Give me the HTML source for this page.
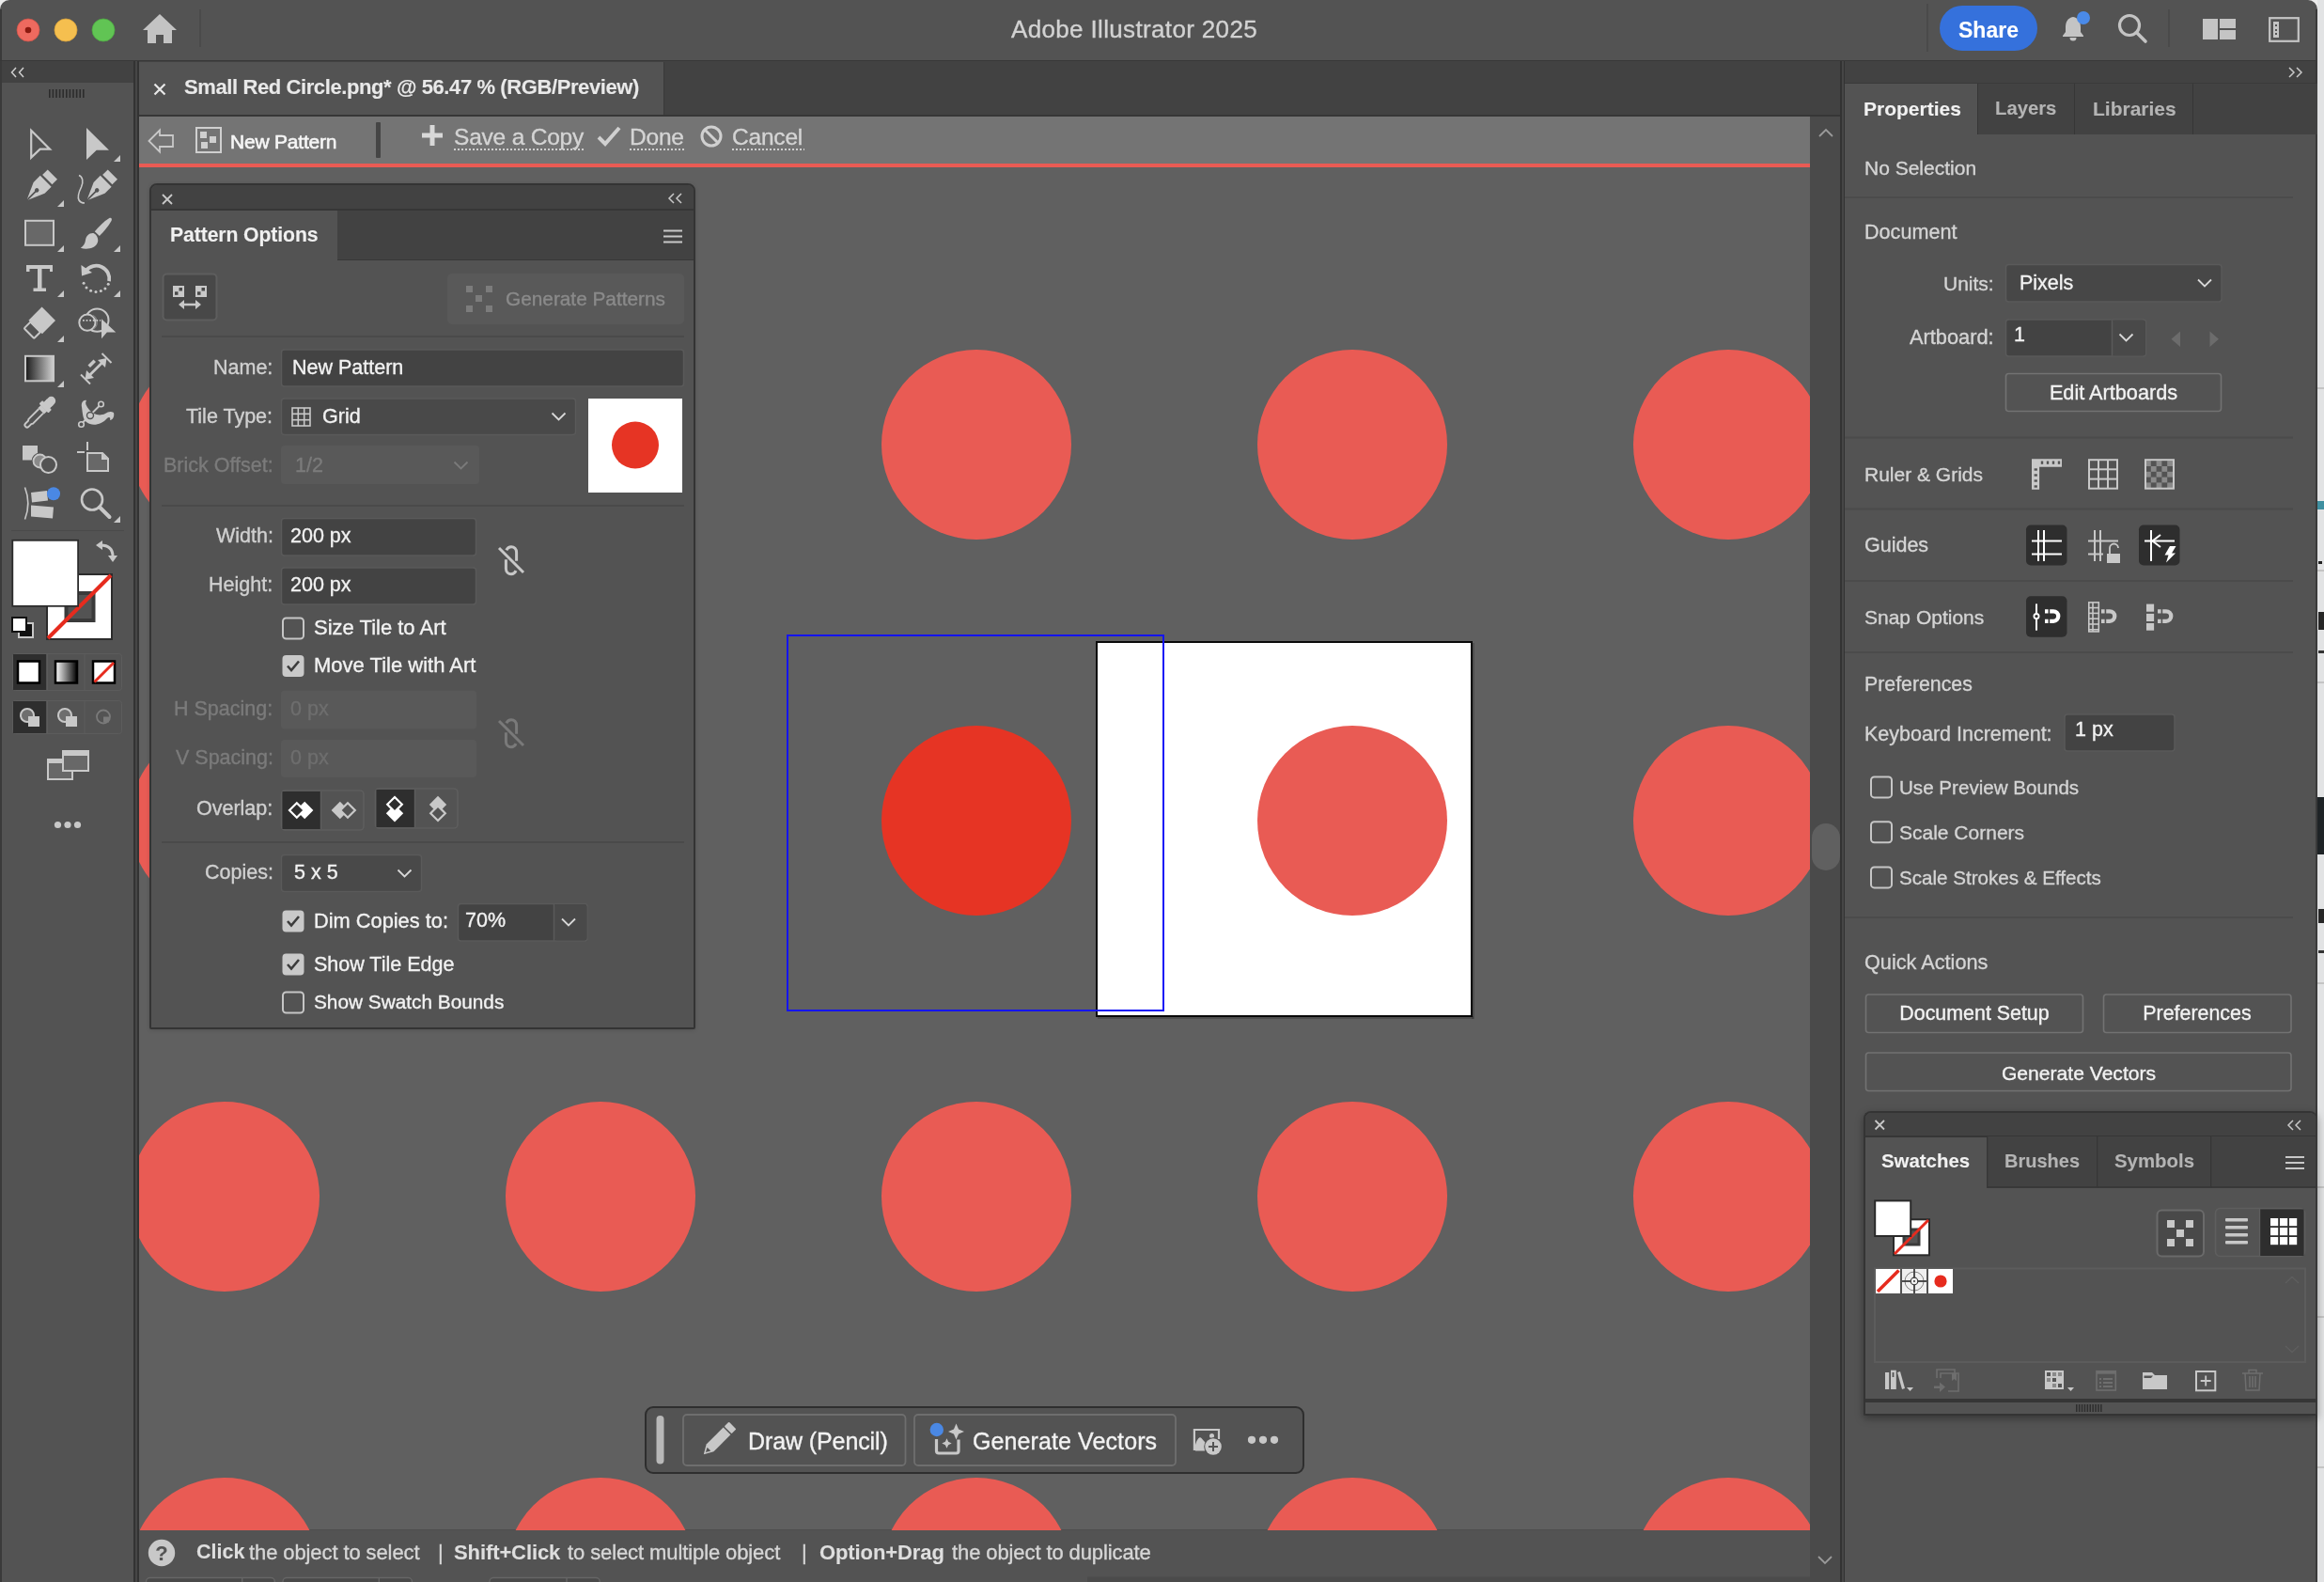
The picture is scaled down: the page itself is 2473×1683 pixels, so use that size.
<!DOCTYPE html>
<html><head><meta charset="utf-8"><style>
html,body{margin:0;padding:0;width:2473px;height:1683px;overflow:hidden;background:#ececec;}
body{position:relative;font-family:"Liberation Sans",sans-serif;}
.r{position:absolute;box-sizing:border-box;}
.t{position:absolute;white-space:pre;line-height:1;-webkit-text-stroke:0.35px currentColor;-webkit-font-smoothing:antialiased;will-change:transform;}
.s{position:absolute;overflow:visible;}
</style></head><body>
<div class="r" style="left:2440px;top:0px;width:33px;height:1683px;background:#ececec;"></div>
<div class="r" style="left:0px;top:0px;width:2466px;height:1683px;background:#535353;border-top-left-radius:10px;border-top-right-radius:10px;"></div>
<div class="r" style="left:0px;top:10px;width:2px;height:1673px;background:#3a3a3a;"></div>
<div class="r" style="left:0px;top:64px;width:2466px;height:1px;background:#383838;"></div>
<div class="r" style="left:2px;top:65px;width:140px;height:1618px;background:#535353;"></div>
<div class="r" style="left:2px;top:65px;width:140px;height:23px;background:#424242;"></div>
<div class="r" style="left:142px;top:65px;width:6px;height:1618px;background:#333333;"></div>
<div class="r" style="left:143.8px;top:65px;width:2.4px;height:1618px;background:#464646;"></div>
<div class="r" style="left:148px;top:65px;width:1810px;height:57px;background:#424242;"></div>
<div class="r" style="left:148px;top:66px;width:558px;height:56px;background:#535353;"></div>
<div class="r" style="left:706px;top:66px;width:1px;height:56px;background:#3a3a3a;"></div>
<div class="r" style="left:148px;top:122px;width:1810px;height:2px;background:#363636;"></div>
<div class="r" style="left:148px;top:124px;width:1778px;height:50px;background:#747474;"></div>
<div class="r" style="left:148px;top:174px;width:1778px;height:4px;background:#ea5b54;"></div>
<div class="r" style="left:148px;top:178px;width:1778px;height:1450px;background:#606060;"></div>
<div class="r" style="left:1926px;top:124px;width:32px;height:1559px;background:#4a4a4a;"></div>
<div class="r" style="left:1958px;top:65px;width:6px;height:1618px;background:#333333;"></div>
<div class="r" style="left:1959.8px;top:65px;width:2.4px;height:1618px;background:#464646;"></div>
<div class="r" style="left:1928px;top:876px;width:30px;height:50px;background:#606060;border-radius:15px;"></div>
<div class="r" style="left:148px;top:1628px;width:1778px;height:55px;background:#535353;"></div>
<div class="r" style="left:148px;top:1627px;width:1778px;height:1px;background:#4d4d4d;"></div>
<div class="r" style="left:1963px;top:65px;width:503px;height:1618px;background:#535353;"></div>
<div class="r" style="left:1963px;top:65px;width:503px;height:24px;background:#424242;"></div>
<div class="r" style="left:2464px;top:10px;width:2px;height:1673px;background:#3a3a3a;"></div>
<div class="r" style="left:2466px;top:0px;width:7px;height:1683px;background:#e2e3e4;"></div>
<div class="r" style="left:2466px;top:412px;width:7px;height:1.5px;background:#c4c4c4;"></div>
<div class="r" style="left:2466px;top:606px;width:7px;height:1.5px;background:#c4c4c4;"></div>
<div class="r" style="left:2466px;top:725px;width:7px;height:1.5px;background:#c4c4c4;"></div>
<div class="r" style="left:2466px;top:1045px;width:7px;height:1.5px;background:#c4c4c4;"></div>
<div class="r" style="left:2466px;top:1262px;width:7px;height:1.5px;background:#c4c4c4;"></div>
<div class="r" style="left:2466px;top:1400px;width:7px;height:1.5px;background:#c4c4c4;"></div>
<div class="r" style="left:2466px;top:1560px;width:7px;height:1.5px;background:#c4c4c4;"></div>
<div class="r" style="left:2466px;top:533px;width:7px;height:9px;background:#3f8fa0;"></div>
<div class="r" style="left:2467px;top:597px;width:4px;height:3px;background:#222;"></div>
<div class="r" style="left:2467px;top:651px;width:6px;height:19px;background:#262626;"></div>
<div class="r" style="left:2467px;top:692px;width:6px;height:3px;background:#333;"></div>
<div class="r" style="left:2466px;top:848px;width:7px;height:61px;background:#1e2326;"></div>
<div class="r" style="left:2467px;top:967px;width:6px;height:15px;background:#262626;"></div>
<div class="r" style="left:2467px;top:1011px;width:6px;height:3px;background:#333;"></div>
<svg class="s" style="left:17px;top:19px;" width="26" height="26" viewBox="0 0 26 26"><circle cx="13" cy="13" r="12" fill="#ee6a5f" stroke="#d0544a" stroke-width="0.8"/></svg>
<svg class="s" style="left:57px;top:19px;" width="26" height="26" viewBox="0 0 26 26"><circle cx="13" cy="13" r="12" fill="#f5bf4f" stroke="#d9a23b" stroke-width="0.8"/></svg>
<svg class="s" style="left:97px;top:19px;" width="26" height="26" viewBox="0 0 26 26"><circle cx="13" cy="13" r="12" fill="#61c454" stroke="#4ea843" stroke-width="0.8"/></svg>
<svg class="s" style="left:24px;top:26px;" width="12" height="12" viewBox="0 0 12 12"><circle cx="6" cy="6" r="3.3" fill="#8c1a10"/></svg>
<svg class="s" style="left:152px;top:15px;" width="36" height="32" viewBox="0 0 36 32"><path d="M18 0 L36 17 L31 17 L31 31 L22 31 L22 22 L14 22 L14 31 L5 31 L5 17 L0 17 Z" fill="#c3c3c3"/></svg>
<div class="r" style="left:211.5px;top:10px;width:2px;height:40px;background:#4a4a4a;"></div>
<div class="t" style="left:607px;width:1200px;text-align:center;top:18.0px;font-size:26px;font-weight:400;color:#d2d2d2;letter-spacing:0.35px;">Adobe Illustrator 2025</div>
<div class="r" style="left:2049.5px;top:4px;width:2px;height:51px;background:#4a4a4a;"></div>
<div class="r" style="left:2064px;top:6px;width:104px;height:48px;background:#3571dc;border-radius:24px;"></div>
<div class="t" style="left:1516px;width:1200px;text-align:center;top:20.5px;font-size:23px;font-weight:700;color:#ffffff;-webkit-text-stroke:0.1px currentColor;">Share</div>
<svg class="s" style="left:2193px;top:15px;" width="30" height="30" viewBox="0 0 30 30"><path d="M13 3 C7 4 5 9 5 14 L5 19 L2 23 L2 24 L24 24 L24 23 L21 19 L21 14 C21 9 19 4 13 3 Z" fill="#c4c4c4"/><path d="M9.5 25 A3.5 3.5 0 0 0 16.5 25 Z" fill="#c4c4c4"/></svg>
<svg class="s" style="left:2209px;top:11px;" width="16" height="16" viewBox="0 0 16 16"><circle cx="8" cy="8" r="7" fill="#4a8ae8"/></svg>
<svg class="s" style="left:2253px;top:14px;" width="34" height="34" viewBox="0 0 34 34"><circle cx="13" cy="13" r="10.5" fill="none" stroke="#c4c4c4" stroke-width="3.2"/><line x1="20.5" y1="20.5" x2="30" y2="30" stroke="#c4c4c4" stroke-width="3.6" stroke-linecap="round"/></svg>
<div class="r" style="left:2306.5px;top:10px;width:2px;height:40px;background:#4a4a4a;"></div>
<svg class="s" style="left:2344px;top:20px;" width="35" height="22" viewBox="0 0 35 22"><rect x="0" y="0" width="16" height="22" fill="#c4c4c4"/><rect x="18" y="0" width="17" height="10" fill="#c4c4c4"/><rect x="18" y="12" width="17" height="10" fill="#c4c4c4"/></svg>
<svg class="s" style="left:2414px;top:18px;" width="33" height="27" viewBox="0 0 33 27"><rect x="1.2" y="1.2" width="30.6" height="24.6" fill="none" stroke="#c4c4c4" stroke-width="2.2"/><rect x="5" y="5" width="6" height="17" fill="#c4c4c4"/><rect x="7" y="8" width="2" height="2" fill="#535353"/><rect x="7" y="13" width="2" height="2" fill="#535353"/><rect x="7" y="17" width="2" height="2" fill="#535353"/></svg>
<svg class="s" style="left:163px;top:87.5px;" width="14" height="14" viewBox="0 0 14 14"><path d="M1.5 1.5 L12.5 12.5 M12.5 1.5 L1.5 12.5" stroke="#e8e8e8" stroke-width="2.2"/></svg>
<div class="t" style="left:196px;top:82.4px;font-size:22px;font-weight:700;color:#e9e9e9;letter-spacing:-0.4px;-webkit-text-stroke:0.1px currentColor;">Small Red Circle.png* @ 56.47 % (RGB/Preview)</div>
<svg class="s" style="left:10px;top:70px;" width="20" height="14" viewBox="0 0 20 14"><path d="M7 2 L2.5 7 L7 12 M15 2 L10.5 7 L15 12" fill="none" stroke="#cfcfcf" stroke-width="1.5"/></svg>
<svg class="s" style="left:52px;top:95px;" width="40" height="9" viewBox="0 0 40 9"><rect x="0.0" y="0" width="1.6" height="9" fill="#2c2c2c"/><rect x="3.6" y="0" width="1.6" height="9" fill="#2c2c2c"/><rect x="7.2" y="0" width="1.6" height="9" fill="#2c2c2c"/><rect x="10.8" y="0" width="1.6" height="9" fill="#2c2c2c"/><rect x="14.4" y="0" width="1.6" height="9" fill="#2c2c2c"/><rect x="18.0" y="0" width="1.6" height="9" fill="#2c2c2c"/><rect x="21.6" y="0" width="1.6" height="9" fill="#2c2c2c"/><rect x="25.2" y="0" width="1.6" height="9" fill="#2c2c2c"/><rect x="28.8" y="0" width="1.6" height="9" fill="#2c2c2c"/><rect x="32.4" y="0" width="1.6" height="9" fill="#2c2c2c"/><rect x="36.0" y="0" width="1.6" height="9" fill="#2c2c2c"/></svg>
<svg class="s" style="left:157px;top:137px;" width="30" height="26" viewBox="0 0 30 26"><path d="M1.5 13 L13 1.5 L13 7 L27 7 L27 19 L13 19 L13 24.5 Z" fill="none" stroke="#c8c8c8" stroke-width="1.8" stroke-linejoin="miter"/></svg>
<svg class="s" style="left:208px;top:135px;" width="28" height="28" viewBox="0 0 28 28"><rect x="1" y="1" width="26" height="26" fill="none" stroke="#cfcfcf" stroke-width="2"/><rect x="5" y="5" width="7" height="7" fill="#cfcfcf"/><rect x="15" y="10" width="7" height="7" fill="#cfcfcf"/><rect x="6" y="16" width="7" height="7" fill="#cfcfcf"/></svg>
<div class="t" style="left:245px;top:139.7px;font-size:21px;font-weight:400;color:#f6f6f6;letter-spacing:-0.2px;-webkit-text-stroke:0.6px currentColor;">New Pattern</div>
<div class="r" style="left:400px;top:130px;width:5px;height:38px;background:#454545;border-radius:1px;"></div>
<svg class="s" style="left:449px;top:133px;" width="22" height="22" viewBox="0 0 22 22"><path d="M11 0 L11 22 M0 11 L22 11" stroke="#d8d8d8" stroke-width="5"/></svg>
<div class="t" style="left:483px;top:134.3px;font-size:24.5px;font-weight:400;color:#d4d4d4;letter-spacing:-0.2px;">Save a Copy</div>
<div class="r" style="left:483px;top:158px;width:138px;height:2px;background:repeating-linear-gradient(90deg,#cfcfcf 0 2px,transparent 2px 4px);"></div>
<svg class="s" style="left:635px;top:133px;" width="26" height="24" viewBox="0 0 26 24"><path d="M2 13 L9 20 L24 3" fill="none" stroke="#d0d0d0" stroke-width="4"/></svg>
<div class="t" style="left:670px;top:134.3px;font-size:24.5px;font-weight:400;color:#d4d4d4;letter-spacing:-0.2px;">Done</div>
<div class="r" style="left:670px;top:158px;width:59px;height:2px;background:repeating-linear-gradient(90deg,#cfcfcf 0 2px,transparent 2px 4px);"></div>
<svg class="s" style="left:745px;top:133px;" width="24" height="24" viewBox="0 0 24 24"><circle cx="12" cy="12" r="10" fill="none" stroke="#d0d0d0" stroke-width="3"/><line x1="5" y1="5" x2="19" y2="19" stroke="#d0d0d0" stroke-width="3"/></svg>
<div class="t" style="left:779px;top:134.3px;font-size:24.5px;font-weight:400;color:#d4d4d4;letter-spacing:-0.2px;">Cancel</div>
<div class="r" style="left:779px;top:158px;width:77px;height:2px;background:repeating-linear-gradient(90deg,#cfcfcf 0 2px,transparent 2px 4px);"></div>
<svg class="s" style="left:1935px;top:136px;" width="16" height="10" viewBox="0 0 16 10"><path d="M1 9 L8 2 L15 9" fill="none" stroke="#9a9a9a" stroke-width="1.8"/></svg>
<svg class="s" style="left:0px;top:0px;" width="148" height="900" viewBox="0 0 148 900"><path d="M33.2 138.8 L53 158.6 L42.6 158.6 L33.2 167.6 Z" fill="none" stroke="#c8c8c8" stroke-width="2.2" stroke-linejoin="miter"/><path d="M92 136 L116 159.7 L102.7 159.7 L92 170 Z" fill="#c8c8c8"/><path d="M121 172 L128 172 L128 165 Z" fill="#c8c8c8"/><g transform="translate(40,201.5) rotate(45) scale(1.12)"><rect x="-6.5" y="-20" width="13" height="7" fill="#c8c8c8"/><path d="M-7.5 -11 L7.5 -11 L7.5 -2 L0.8 13 L-0.8 13 L-7.5 -2 Z" fill="#c8c8c8"/><line x1="0" y1="1" x2="0" y2="13" stroke="#535353" stroke-width="1.6"/><circle cx="0" cy="1" r="2" fill="#535353"/></g><path d="M61 220 L68 220 L68 213 Z" fill="#c8c8c8"/><g transform="translate(104,201.5) rotate(45) scale(1.12)"><rect x="-6.5" y="-20" width="13" height="7" fill="#c8c8c8"/><path d="M-7.5 -11 L7.5 -11 L7.5 -2 L0.8 13 L-0.8 13 L-7.5 -2 Z" fill="#c8c8c8"/><line x1="0" y1="1" x2="0" y2="13" stroke="#535353" stroke-width="1.6"/><circle cx="0" cy="1" r="2" fill="#535353"/></g><path d="M84 186.5 C88 188 89 193 86.5 199 C84 204 82 209 84 213 C85.5 215.5 88 216 90 216" fill="none" stroke="#c8c8c8" stroke-width="1.6"/><rect x="27" y="234.8" width="30" height="26" fill="#686868" stroke="#c8c8c8" stroke-width="2"/><path d="M61 268 L68 268 L68 261 Z" fill="#c8c8c8"/><path d="M116 232.2 C118.5 231 119.5 233 118.5 235 C115 241 110.5 246.5 105.8 251 L100.8 246.2 C105.5 241 110.5 235.5 116 232.2 Z" fill="#c8c8c8"/><path d="M99.5 248 C95 247.5 91.5 251 91 255.5 C90.5 259.5 88.5 262 85.8 263.8 C93 266 102 264 104 257.5 C105 254 103 249.5 99.5 248 Z" fill="#c8c8c8"/><path d="M121 268 L128 268 L128 261 Z" fill="#c8c8c8"/><path d="M28 282 L56 282 L56 289 L53 289 L53 286 L44.5 286 L44.5 306.5 L49 306.5 L49 310 L35.5 310 L35.5 306.5 L40 306.5 L40 286 L31.5 286 L31.5 289 L28 289 Z" fill="#c8c8c8"/><path d="M61 316 L68 316 L68 309 Z" fill="#c8c8c8"/><path d="M91.5 287.8 A14 14 0 0 1 116.1 299.2" fill="none" stroke="#c8c8c8" stroke-width="3.8"/><path d="M86.4 282 L98 290 L87 293.5 Z" fill="#c8c8c8"/><circle cx="115.2" cy="302.3" r="1.5" fill="#c8c8c8"/><circle cx="111.9" cy="306.9" r="1.5" fill="#c8c8c8"/><circle cx="107.3" cy="309.6" r="1.5" fill="#c8c8c8"/><circle cx="102.0" cy="310.5" r="1.5" fill="#c8c8c8"/><circle cx="96.6" cy="309.3" r="1.5" fill="#c8c8c8"/><circle cx="92.0" cy="306.0" r="1.5" fill="#c8c8c8"/><circle cx="89.1" cy="301.2" r="1.5" fill="#c8c8c8"/><path d="M121 316 L128 316 L128 309 Z" fill="#c8c8c8"/><g transform="translate(42.6,343) rotate(45)"><rect x="-10.2" y="-13" width="20.4" height="20" fill="#c8c8c8"/><path d="M-7.5 7 L7.5 7 L7.5 15.5 Q7.5 16.5 6.5 16.5 L-6.5 16.5 Q-7.5 16.5 -7.5 15.5 Z" fill="none" stroke="#c8c8c8" stroke-width="2"/></g><path d="M61 364 L68 364 L68 357 Z" fill="#c8c8c8"/><circle cx="103.3" cy="340.6" r="12.2" fill="none" stroke="#c8c8c8" stroke-width="2"/><circle cx="92.9" cy="343.2" r="8.6" fill="#535353" stroke="#c8c8c8" stroke-width="2"/><path d="M99 335.5 A8.6 8.6 0 0 1 99.5 350" fill="none" stroke="#858585" stroke-width="1.3"/><line x1="88" y1="340.8" x2="107" y2="340.8" stroke="#c8c8c8" stroke-width="1.8" stroke-dasharray="1.8 1.8"/><path d="M108 339.3 L123.3 353.6 L113.8 353.6 L108 360.2 Z" fill="#c8c8c8"/><defs><linearGradient id="gr" x1="0" x2="1"><stop offset="0" stop-color="#1a1a1a"/><stop offset="1" stop-color="#d0d0d0"/></linearGradient></defs><rect x="27" y="378.8" width="30" height="26.5" fill="url(#gr)" stroke="#c8c8c8" stroke-width="2"/><path d="M61 412 L68 412 L68 405 Z" fill="#c8c8c8"/><line x1="86" y1="398.5" x2="96" y2="408.5" stroke="#c8c8c8" stroke-width="2"/><line x1="108.5" y1="376" x2="118.5" y2="386" stroke="#c8c8c8" stroke-width="2"/><line x1="94" y1="400.5" x2="110" y2="384.5" stroke="#c8c8c8" stroke-width="2.6"/><path d="M90.5 404 L92 394 L100 402 Z" fill="#c8c8c8"/><path d="M113.5 381 L112 391 L104 383 Z" fill="#c8c8c8"/><path d="M93.5 388.5 L99.5 382.5 L102 385 L96 391 Z" fill="#c8c8c8"/><g transform="translate(41.2,439.8) rotate(45)"><rect x="-4.6" y="-23.5" width="9.2" height="12" rx="4.6" fill="#c8c8c8"/><rect x="-4.6" y="-17" width="9.2" height="6" fill="#c8c8c8"/><rect x="-7" y="-12.5" width="14" height="5" rx="1" fill="#c8c8c8"/><rect x="-4.6" y="-8" width="9.2" height="4.5" fill="#c8c8c8"/><path d="M-3.3 -3.5 L-3.3 12 L-2.4 13.5 L-2.4 17.5 A2.4 2.4 0 0 0 2.4 17.5 L2.4 13.5 L3.3 12 L3.3 -3.5" fill="none" stroke="#c8c8c8" stroke-width="1.9"/></g><path d="M87 433 C86 428 89 425 92 426 C90 429 92 432 95 436 C99 441 106 443 112 440 C115 438 118 437 121 439 C122 443 120 447 117 447 C118 444 116 443 114 445 C108 452 98 454 92 449 C88 446 88 440 87 433 Z" fill="#c8c8c8"/><line x1="86.5" y1="451" x2="107" y2="430.5" stroke="#c8c8c8" stroke-width="1.8"/><circle cx="86.5" cy="451.5" r="2.8" fill="#535353" stroke="#c8c8c8" stroke-width="1.6"/><circle cx="107.5" cy="430" r="2.8" fill="#535353" stroke="#c8c8c8" stroke-width="1.6"/><circle cx="96" cy="442" r="3.5" fill="none" stroke="#535353" stroke-width="1.4"/><rect x="24" y="474" width="16" height="15.5" fill="#c8c8c8"/><circle cx="42.5" cy="490.5" r="8" fill="#8a8a8a" stroke="#535353" stroke-width="2"/><circle cx="42.5" cy="490.5" r="7" fill="#8a8a8a" stroke="#c8c8c8" stroke-width="1.8"/><circle cx="51.5" cy="494.5" r="8.5" fill="#535353" stroke="#c8c8c8" stroke-width="2"/><line x1="93" y1="470" x2="93" y2="479" stroke="#c8c8c8" stroke-width="2"/><line x1="82" y1="481" x2="90" y2="481" stroke="#c8c8c8" stroke-width="2"/><path d="M93 482 L109 482 L115 488 L115 501 L93 501 Z" fill="#686868" stroke="#c8c8c8" stroke-width="2"/><path d="M108 482 L115 489 L108 489 Z" fill="#c8c8c8"/><path d="M26.5 518.5 C31 530 31 541 26.5 552.5" fill="none" stroke="#c8c8c8" stroke-width="1.6"/><path d="M33 524 L50 522 L51 532.5 L34 534.5 Z" fill="#c8c8c8"/><path d="M33 537.5 L57 539.5 L56 551.5 L33 549.5 Z" fill="#c8c8c8"/><circle cx="57" cy="525.3" r="7" fill="#4a88e4"/><circle cx="98" cy="531.5" r="11" fill="none" stroke="#c8c8c8" stroke-width="2.6"/><line x1="106" y1="539.5" x2="116.5" y2="550" stroke="#c8c8c8" stroke-width="4" stroke-linecap="round"/><path d="M121 556 L128 556 L128 549 Z" fill="#c8c8c8"/><rect x="12" y="564" width="120" height="1" fill="#4a4a4a"/><rect x="50" y="611" width="69" height="69" fill="#ffffff" stroke="#2c2c2c" stroke-width="2"/><rect x="70.5" y="631" width="29" height="29" fill="#535353" stroke="#3a3a3a" stroke-width="4"/><line x1="51" y1="679" x2="118" y2="612" stroke="#e62b1e" stroke-width="4"/><rect x="13.3" y="574.8" width="69.8" height="70" fill="#ffffff" stroke="#2c2c2c" stroke-width="1.8"/><path d="M107 580 C116 580 120 584 120 592" fill="none" stroke="#c8c8c8" stroke-width="3"/><path d="M102 580 L109 575 L109 585 Z" fill="#c8c8c8"/><path d="M115 591 L125 591 L120 598 Z" fill="#c8c8c8"/><rect x="20" y="663" width="15" height="15" fill="#111" stroke="#c8c8c8" stroke-width="2"/><rect x="13" y="657" width="15" height="15" fill="#fff" stroke="#111" stroke-width="2"/><rect x="13" y="657" width="15" height="15" fill="none" stroke="#c8c8c8" stroke-width="1" transform="translate(-1,-1) scale(1)" opacity="0"/><rect x="13.5" y="695.5" width="116" height="39" rx="3" fill="none" stroke="#5c5c5c" stroke-width="1"/><rect x="14" y="696" width="35" height="38" fill="#2e2e2e"/><line x1="50.5" y1="696" x2="50.5" y2="734" stroke="#5c5c5c"/><line x1="90" y1="696" x2="90" y2="734" stroke="#5c5c5c"/><rect x="19" y="703.5" width="23" height="23" fill="#fff" stroke="#000" stroke-width="2.5"/><defs><linearGradient id="gr2" x1="0" x2="1"><stop offset="0" stop-color="#fff"/><stop offset="1" stop-color="#000"/></linearGradient></defs><rect x="59" y="703.5" width="23" height="23" fill="url(#gr2)" stroke="#000" stroke-width="2.5"/><rect x="99" y="703.5" width="23" height="23" fill="#fff" stroke="#000" stroke-width="2.5"/><line x1="100.5" y1="725.5" x2="121" y2="705" stroke="#e62b1e" stroke-width="3"/><rect x="13.5" y="745.5" width="116" height="35" rx="3" fill="none" stroke="#5c5c5c" stroke-width="1"/><rect x="14" y="746" width="35" height="34" fill="#2e2e2e"/><line x1="50.5" y1="746" x2="50.5" y2="780" stroke="#5c5c5c"/><line x1="90" y1="746" x2="90" y2="780" stroke="#5c5c5c"/><circle cx="29" cy="761" r="7" fill="#6e6e6e" stroke="#c8c8c8" stroke-width="2"/><rect x="30" y="762" width="12" height="11" fill="#c8c8c8"/><circle cx="69" cy="761" r="7" fill="#6e6e6e" stroke="#c8c8c8" stroke-width="2"/><rect x="70" y="762" width="12" height="11" fill="#c8c8c8"/><circle cx="110" cy="762.5" r="7" fill="none" stroke="#7a7a7a" stroke-width="1.8"/><rect x="110" y="762.5" width="6" height="6" fill="#7a7a7a"/><rect x="51" y="808" width="26" height="21" fill="#686868" stroke="#c8c8c8" stroke-width="2"/><rect x="51" y="808" width="26" height="4" fill="#c8c8c8"/><rect x="67" y="799" width="27" height="21" fill="#686868" stroke="#c8c8c8" stroke-width="2"/><rect x="67" y="799" width="27" height="5" fill="#c8c8c8"/><circle cx="61.5" cy="877.5" r="3.6" fill="#c8c8c8"/><circle cx="72" cy="877.5" r="3.6" fill="#c8c8c8"/><circle cx="82.5" cy="877.5" r="3.6" fill="#c8c8c8"/></svg>
<div class="r" style="left:148px;top:178px;width:1778px;height:1450px;overflow:hidden;box-shadow:none"><svg class="s" style="left:0px;top:0px;" width="1778" height="1450" viewBox="0 0 1778 1450"><rect x="1019" y="505" width="399" height="398" fill="#ffffff" stroke="#0a0a0a" stroke-width="2"/><circle cx="91" cy="295" r="101" fill="#e95b54"/><circle cx="491" cy="295" r="101" fill="#e95b54"/><circle cx="891" cy="295" r="101" fill="#e95b54"/><circle cx="1291" cy="295" r="101" fill="#e95b54"/><circle cx="1691" cy="295" r="101" fill="#e95b54"/><circle cx="91" cy="695" r="101" fill="#e95b54"/><circle cx="491" cy="695" r="101" fill="#e95b54"/><circle cx="891" cy="695" r="101" fill="#e63424"/><circle cx="1291" cy="695" r="101" fill="#e95b54"/><circle cx="1691" cy="695" r="101" fill="#e95b54"/><circle cx="91" cy="1095" r="101" fill="#e95b54"/><circle cx="491" cy="1095" r="101" fill="#e95b54"/><circle cx="891" cy="1095" r="101" fill="#e95b54"/><circle cx="1291" cy="1095" r="101" fill="#e95b54"/><circle cx="1691" cy="1095" r="101" fill="#e95b54"/><circle cx="91" cy="1495" r="101" fill="#e95b54"/><circle cx="491" cy="1495" r="101" fill="#e95b54"/><circle cx="891" cy="1495" r="101" fill="#e95b54"/><circle cx="1291" cy="1495" r="101" fill="#e95b54"/><circle cx="1691" cy="1495" r="101" fill="#e95b54"/><rect x="690" y="498" width="400" height="399" fill="none" stroke="#1414f5" stroke-width="2"/></svg>
</div>
<div class="r" style="left:1168px;top:1081px;width:400px;height:3px;background:rgba(0,0,0,0.18);"></div>
<div class="r" style="left:1566px;top:684px;width:3px;height:400px;background:rgba(0,0,0,0.18);"></div>
<div class="r" style="left:159px;top:195px;width:581px;height:900px;background:#535353;border:2px solid #343434;border-radius:8px 8px 2px 2px;box-shadow:0 1px 4px rgba(0,0,0,0.15);"></div>
<div class="r" style="left:161px;top:197px;width:577px;height:26px;background:#424242;border-radius:6px 6px 0 0;"></div>
<div class="r" style="left:161px;top:223px;width:577px;height:54px;background:#424242;"></div>
<div class="r" style="left:359px;top:275.5px;width:379px;height:1.6px;background:#383838;"></div>
<div class="r" style="left:161px;top:223px;width:198px;height:54px;background:#535353;"></div>
<div class="r" style="left:161px;top:222px;width:577px;height:1.6px;background:#363636;"></div>
<svg class="s" style="left:0px;top:0px;" width="760" height="1100" viewBox="0 0 760 1100"><path d="M173 207 L183 217 M183 207 L173 217" stroke="#c8c8c8" stroke-width="1.8"/><path d="M717 206 L712 211 L717 216 M725 206 L720 211 L725 216" fill="none" stroke="#c8c8c8" stroke-width="1.5"/><rect x="706" y="244.5" width="20" height="2" fill="#c8c8c8"/><rect x="706" y="250.5" width="20" height="2" fill="#c8c8c8"/><rect x="706" y="256.5" width="20" height="2" fill="#c8c8c8"/><rect x="173.5" y="291.5" width="57" height="49" rx="4" fill="#484848" stroke="#5e5e5e" stroke-width="2"/><rect x="184" y="304" width="12" height="12" fill="#c8c8c8"/><rect x="190.5" y="306" width="3.5" height="3.5" fill="#484848"/><rect x="186" y="310.3" width="3.5" height="3.5" fill="#484848"/><rect x="208" y="304" width="12" height="12" fill="#c8c8c8"/><rect x="214.5" y="306" width="3.5" height="3.5" fill="#484848"/><rect x="210" y="310.3" width="3.5" height="3.5" fill="#484848"/><path d="M190 324 L196 319 L196 322.8 L208 322.8 L208 319 L214 324 L208 329 L208 325.2 L196 325.2 L196 329 Z" fill="#c8c8c8"/><rect x="476" y="291" width="252" height="54" rx="5" fill="#595959"/><rect x="496" y="304" width="7" height="7" fill="#7c7c7c"/><rect x="517" y="304" width="7" height="7" fill="#7c7c7c"/><rect x="506" y="314" width="7" height="7" fill="#7c7c7c"/><rect x="496" y="325" width="7" height="7" fill="#7c7c7c"/><rect x="517" y="325" width="7" height="7" fill="#7c7c7c"/><rect x="172" y="357" width="556" height="2" fill="#4a4a4a"/><rect x="299.5" y="372" width="428" height="39" rx="3" fill="#434343" stroke="#5a5a5a" stroke-width="1.5"/><rect x="299.5" y="424" width="313" height="38.5" rx="3" fill="#494949" stroke="#5a5a5a" stroke-width="1.5"/><g fill="none" stroke="#c8c8c8" stroke-width="1.6"><rect x="311" y="434" width="19" height="19"/><line x1="317.3" y1="434" x2="317.3" y2="453"/><line x1="323.7" y1="434" x2="323.7" y2="453"/><line x1="311" y1="440.3" x2="330" y2="440.3"/><line x1="311" y1="446.7" x2="330" y2="446.7"/></g><path d="M587.5 439.5 L594.5 446.5 L601.5 439.5" fill="none" stroke="#d8d8d8" stroke-width="1.8"/><rect x="626" y="424" width="100" height="100" fill="#ffffff"/><circle cx="676" cy="473.5" r="25" fill="#e63424"/><rect x="299" y="474" width="211" height="41" rx="4" fill="#595959"/><path d="M483.5 491.5 L490.5 498.5 L497.5 491.5" fill="none" stroke="#7a7a7a" stroke-width="1.8"/><rect x="172" y="537" width="556" height="2" fill="#4a4a4a"/><rect x="299.5" y="551.5" width="207" height="39.5" rx="3" fill="#434343" stroke="#5a5a5a" stroke-width="1.5"/><rect x="299.5" y="604" width="207" height="39" rx="3" fill="#434343" stroke="#5a5a5a" stroke-width="1.5"/><g transform="translate(544,596)" fill="none" stroke="#c8c8c8" stroke-width="3"><line x1="-13" y1="-13" x2="13" y2="13"/><path d="M-5.2 -10.8 C-3.8 -13.5 -1.8 -14.3 0 -14.3 C3.3 -14.3 5.6 -12 5.6 -8.3 L5.6 0.8"/><path d="M-5.6 -0.8 L-5.6 9 C-5.6 12.5 -3 14.7 0 14.7 C2.3 14.7 4 13.5 5 11.2"/></g><rect x="301" y="657.5" width="22" height="22" rx="3.5" fill="none" stroke="#c6c6c6" stroke-width="2"/><rect x="300.5" y="697.0" width="23" height="23" rx="4" fill="#c9c9c9"/><path d="M306 708.5 L310 713.0 L318 703.5" fill="none" stroke="#3c3c3c" stroke-width="2.6"/><rect x="299" y="734.5" width="208" height="41" rx="4" fill="#595959"/><rect x="299" y="787" width="208" height="40" rx="4" fill="#595959"/><g transform="translate(544,780)" fill="none" stroke="#7a7a7a" stroke-width="3"><line x1="-13" y1="-13" x2="13" y2="13"/><path d="M-5.2 -10.8 C-3.8 -13.5 -1.8 -14.3 0 -14.3 C3.3 -14.3 5.6 -12 5.6 -8.3 L5.6 0.8"/><path d="M-5.6 -0.8 L-5.6 9 C-5.6 12.5 -3 14.7 0 14.7 C2.3 14.7 4 13.5 5 11.2"/></g><rect x="299.5" y="841" width="87.5" height="42" rx="4" fill="none" stroke="#5e5e5e" stroke-width="1.6"/><rect x="300.5" y="842" width="40.5" height="40" fill="#2e2e2e"/><line x1="341.5" y1="842" x2="341.5" y2="882" stroke="#5e5e5e" stroke-width="1.4"/><path d="M324.2 852.8 L333.4 862 L324.2 871.2 L315.0 862 Z" fill="#ffffff"/><path d="M315.8 854.1999999999999 L323.6 862 L315.8 869.8000000000001 L308.0 862 Z" fill="#2e2e2e" stroke="#ffffff" stroke-width="2.2"/><path d="M361.8 852.8 L371.0 862 L361.8 871.2 L352.6 862 Z" fill="#c8c8c8"/><path d="M370 854.1999999999999 L377.8 862 L370 869.8000000000001 L362.2 862 Z" fill="#535353" stroke="#c8c8c8" stroke-width="2.2"/><rect x="399.5" y="839" width="87.5" height="42" rx="4" fill="none" stroke="#5e5e5e" stroke-width="1.6"/><rect x="400.5" y="840" width="40.5" height="40" fill="#2e2e2e"/><line x1="441.5" y1="840" x2="441.5" y2="880" stroke="#5e5e5e" stroke-width="1.4"/><path d="M420 856.0 L429.2 865.2 L420 874.4000000000001 L410.8 865.2 Z" fill="#ffffff"/><path d="M420 847.9999999999999 L427.8 855.8 L420 863.6 L412.2 855.8 Z" fill="#2e2e2e" stroke="#ffffff" stroke-width="2.2"/><path d="M466 846.8 L475.2 856 L466 865.2 L456.8 856 Z" fill="#c8c8c8"/><path d="M466 857.4 L473.8 865.2 L466 873.0000000000001 L458.2 865.2 Z" fill="#535353" stroke="#c8c8c8" stroke-width="2.2"/><rect x="172" y="895" width="556" height="2" fill="#4a4a4a"/><rect x="299.5" y="909.5" width="149" height="39" rx="3" fill="#494949" stroke="#5a5a5a" stroke-width="1.5"/><path d="M423.5 925.5 L430.5 932.5 L437.5 925.5" fill="none" stroke="#d8d8d8" stroke-width="1.8"/><rect x="300.5" y="968.5" width="23" height="23" rx="4" fill="#c9c9c9"/><path d="M306 980 L310 984.5 L318 975" fill="none" stroke="#3c3c3c" stroke-width="2.6"/><rect x="487.5" y="961.5" width="137.5" height="39.5" rx="3" fill="#434343" stroke="#5a5a5a" stroke-width="1.5"/><rect x="590" y="962.3" width="34.3" height="38" rx="2" fill="#494949"/><line x1="589.5" y1="962" x2="589.5" y2="1001" stroke="#5a5a5a" stroke-width="1.5"/><path d="M598.0 977.5 L605 984.5 L612.0 977.5" fill="none" stroke="#d8d8d8" stroke-width="1.8"/><rect x="300.5" y="1014.5" width="23" height="23" rx="4" fill="#c9c9c9"/><path d="M306 1026 L310 1030.5 L318 1021" fill="none" stroke="#3c3c3c" stroke-width="2.6"/><rect x="301" y="1055.5" width="22" height="22" rx="3.5" fill="none" stroke="#c6c6c6" stroke-width="2"/></svg>
<div class="t" style="left:180.5px;top:239.0px;font-size:21.2px;font-weight:700;color:#f0f0f0;letter-spacing:-0.1px;-webkit-text-stroke:0.1px currentColor;">Pattern Options</div>
<div class="t" style="left:538px;top:308.4px;font-size:20.8px;font-weight:400;color:#8a8a8a;">Generate Patterns</div>
<div class="t" style="right:2182.5px;text-align:right;top:380.8px;font-size:21.5px;font-weight:400;color:#d0d0d0;">Name:</div>
<div class="t" style="left:310.5px;top:380.8px;font-size:21.5px;font-weight:400;color:#f2f2f2;">New Pattern</div>
<div class="t" style="right:2182.5px;text-align:right;top:432.8px;font-size:21.5px;font-weight:400;color:#d0d0d0;">Tile Type:</div>
<div class="t" style="left:342.5px;top:432.8px;font-size:21.5px;font-weight:400;color:#f2f2f2;">Grid</div>
<div class="t" style="right:2182.5px;text-align:right;top:484.8px;font-size:21.5px;font-weight:400;color:#7b7b7b;">Brick Offset:</div>
<div class="t" style="left:314px;top:484.8px;font-size:21.5px;font-weight:400;color:#7b7b7b;">1/2</div>
<div class="t" style="right:2182.5px;text-align:right;top:560.3px;font-size:21.5px;font-weight:400;color:#d0d0d0;">Width:</div>
<div class="t" style="left:309px;top:560.3px;font-size:21.5px;font-weight:400;color:#f2f2f2;">200 px</div>
<div class="t" style="right:2182.5px;text-align:right;top:612.3px;font-size:21.5px;font-weight:400;color:#d0d0d0;">Height:</div>
<div class="t" style="left:309px;top:612.3px;font-size:21.5px;font-weight:400;color:#f2f2f2;">200 px</div>
<div class="t" style="left:334px;top:657.4px;font-size:22px;font-weight:400;color:#f2f2f2;">Size Tile to Art</div>
<div class="t" style="left:334px;top:696.9px;font-size:22px;font-weight:400;color:#f2f2f2;">Move Tile with Art</div>
<div class="t" style="right:2182.5px;text-align:right;top:744.3px;font-size:21.5px;font-weight:400;color:#7b7b7b;">H Spacing:</div>
<div class="t" style="left:309px;top:744.3px;font-size:21.5px;font-weight:400;color:#6e6e6e;">0 px</div>
<div class="t" style="right:2182.5px;text-align:right;top:795.8px;font-size:21.5px;font-weight:400;color:#7b7b7b;">V Spacing:</div>
<div class="t" style="left:309px;top:795.8px;font-size:21.5px;font-weight:400;color:#6e6e6e;">0 px</div>
<div class="t" style="right:2182.5px;text-align:right;top:850.3px;font-size:21.5px;font-weight:400;color:#d0d0d0;">Overlap:</div>
<div class="t" style="right:2182.5px;text-align:right;top:918.3px;font-size:21.5px;font-weight:400;color:#d0d0d0;">Copies:</div>
<div class="t" style="left:312.5px;top:918.3px;font-size:21.5px;font-weight:400;color:#f2f2f2;">5 x 5</div>
<div class="t" style="left:334px;top:969.0px;font-size:21.8px;font-weight:400;color:#f2f2f2;">Dim Copies to:</div>
<div class="t" style="left:495px;top:969.3px;font-size:21.5px;font-weight:400;color:#f2f2f2;">70%</div>
<div class="t" style="left:334px;top:1015.8px;font-size:21.5px;font-weight:400;color:#f2f2f2;">Show Tile Edge</div>
<div class="t" style="left:334px;top:1056.4px;font-size:20.8px;font-weight:400;color:#f2f2f2;">Show Swatch Bounds</div>
<svg class="s" style="left:0px;top:0px;pointer-events:none;" width="2473" height="1683" viewBox="0 0 2473 1683"><path d="M2436 72 L2441 77 L2436 82 M2444 72 L2449 77 L2444 82" fill="none" stroke="#c8c8c8" stroke-width="1.5"/><rect x="2104" y="89" width="362" height="54" fill="#424242"/><rect x="2104" y="89" width="1" height="54" fill="#363636"/><rect x="2207" y="89" width="1" height="54" fill="#363636"/><rect x="2333" y="89" width="1" height="54" fill="#363636"/><rect x="1963" y="88" width="503" height="1" fill="#3a3a3a"/><rect x="1963" y="209" width="477" height="2" fill="#4b4b4b"/><rect x="1963" y="464.5" width="477" height="2" fill="#4b4b4b"/><rect x="1963" y="540.5" width="477" height="2" fill="#4b4b4b"/><rect x="1963" y="617" width="477" height="2" fill="#4b4b4b"/><rect x="1963" y="693" width="477" height="2" fill="#4b4b4b"/><rect x="1963" y="975" width="477" height="2" fill="#4b4b4b"/><rect x="2134.5" y="281.5" width="229.5" height="39.5" rx="3" fill="#474747" stroke="#5a5a5a" stroke-width="1.5"/><path d="M2339.0 297.5 L2346 304.5 L2353.0 297.5" fill="none" stroke="#d8d8d8" stroke-width="1.8"/><rect x="2134.5" y="340" width="149" height="39" rx="3" fill="#434343" stroke="#5a5a5a" stroke-width="1.5"/><rect x="2248" y="340.8" width="34.8" height="37.4" rx="2" fill="#494949"/><line x1="2247.5" y1="340.5" x2="2247.5" y2="378.5" stroke="#5a5a5a" stroke-width="1.5"/><path d="M2255.5 355.5 L2262.5 362.5 L2269.5 355.5" fill="none" stroke="#d8d8d8" stroke-width="1.8"/><path d="M2320 352.5 L2310.5 360.7 L2320 369 Z" fill="#6c6c6c"/><path d="M2351.5 352.5 L2361 360.7 L2351.5 369 Z" fill="#6c6c6c"/><rect x="2134.5" y="397.5" width="229" height="40" rx="3" fill="none" stroke="#727272" stroke-width="1.6"/><path d="M2162 488.2 L2194 488.2 L2194 496.8 L2170.1 496.8 L2170.1 520.7 L2162 520.7 Z" fill="#c8c8c8"/><rect x="2171.8" y="490.5" width="2.4" height="3.3" fill="#535353"/><rect x="2177.8" y="490.5" width="2.4" height="3.3" fill="#535353"/><rect x="2183.8" y="490.5" width="2.4" height="3.3" fill="#535353"/><rect x="2189.8" y="490.5" width="2.4" height="3.3" fill="#535353"/><rect x="2164.6" y="498.3" width="3.3" height="2.4" fill="#535353"/><rect x="2164.6" y="504.3" width="3.3" height="2.4" fill="#535353"/><rect x="2164.6" y="510.3" width="3.3" height="2.4" fill="#535353"/><rect x="2164.6" y="516.3" width="3.3" height="2.4" fill="#535353"/><g fill="none" stroke="#c8c8c8" stroke-width="2"><rect x="2223" y="489.2" width="30" height="30.5"/><line x1="2233" y1="489" x2="2233" y2="520"/><line x1="2243" y1="489" x2="2243" y2="520"/><line x1="2223" y1="499.3" x2="2253" y2="499.3"/><line x1="2223" y1="509.6" x2="2253" y2="509.6"/></g><rect x="2283.0" y="490.2" width="5.8" height="5.8" fill="#8a8a8a"/><rect x="2283.0" y="501.8" width="5.8" height="5.8" fill="#8a8a8a"/><rect x="2283.0" y="513.4" width="5.8" height="5.8" fill="#8a8a8a"/><rect x="2288.8" y="496.0" width="5.8" height="5.8" fill="#8a8a8a"/><rect x="2288.8" y="507.6" width="5.8" height="5.8" fill="#8a8a8a"/><rect x="2294.6" y="490.2" width="5.8" height="5.8" fill="#8a8a8a"/><rect x="2294.6" y="501.8" width="5.8" height="5.8" fill="#8a8a8a"/><rect x="2294.6" y="513.4" width="5.8" height="5.8" fill="#8a8a8a"/><rect x="2300.4" y="496.0" width="5.8" height="5.8" fill="#8a8a8a"/><rect x="2300.4" y="507.6" width="5.8" height="5.8" fill="#8a8a8a"/><rect x="2306.2" y="490.2" width="5.8" height="5.8" fill="#8a8a8a"/><rect x="2306.2" y="501.8" width="5.8" height="5.8" fill="#8a8a8a"/><rect x="2306.2" y="513.4" width="5.8" height="5.8" fill="#8a8a8a"/><rect x="2283" y="489.2" width="30" height="30.5" fill="none" stroke="#c8c8c8" stroke-width="2"/><rect x="2156" y="558.5" width="43.5" height="43" rx="5" fill="#2e2e2e"/><rect x="2276" y="558.5" width="43.5" height="43" rx="5" fill="#2e2e2e"/><g stroke="#ffffff" stroke-width="2"><line x1="2169" y1="564" x2="2169" y2="597"/><line x1="2175" y1="564" x2="2175" y2="597"/><line x1="2162" y1="575.5" x2="2194" y2="575.5"/><line x1="2162" y1="589.5" x2="2194" y2="589.5"/></g><g stroke="#c8c8c8" stroke-width="2"><line x1="2229" y1="564" x2="2229" y2="597"/><line x1="2235" y1="564" x2="2235" y2="597"/><line x1="2222" y1="575.5" x2="2254" y2="575.5"/><line x1="2222" y1="589.5" x2="2238" y2="589.5"/></g><rect x="2242" y="589" width="14" height="10" fill="#c8c8c8"/><path d="M2245 589 L2245 583 A4.5 4.5 0 0 1 2254 583" fill="none" stroke="#c8c8c8" stroke-width="1.8"/><g stroke="#ffffff" stroke-width="2" fill="none"><line x1="2289" y1="564" x2="2289" y2="597"/><line x1="2282" y1="575.5" x2="2314" y2="575.5"/><path d="M2299 569 L2290.5 575.5 L2299 582"/></g><path d="M2309 581 L2315.5 581 L2311 588.5 L2315 588.5 L2305 598.5 L2307.5 590.5 L2303.5 590.5 Z" fill="#ffffff"/><rect x="2156" y="634.3" width="43.5" height="43.5" rx="5" fill="#2e2e2e"/><rect x="2166" y="642.4" width="2" height="28.3" fill="#ffffff"/><circle cx="2167" cy="655.6" r="2.6" fill="#2e2e2e" stroke="#ffffff" stroke-width="1.8"/><path d="M2176 648.2 L2185 648.2 A7.4 7.4 0 0 1 2185 663.0 L2176 663.0 L2176 658.7 L2185 658.7 A3.1 3.1 0 0 0 2185 652.5 L2176 652.5 Z" fill="#ffffff"/><rect x="2179.6" y="647.6" width="1.6" height="16" fill="#2e2e2e"/><g fill="none" stroke="#c8c8c8" stroke-width="1.6"><rect x="2222.8" y="640.9" width="10.5" height="31"/><line x1="2227" y1="641" x2="2227" y2="672"/></g><line x1="2222" y1="646.6" x2="2234" y2="646.6" stroke="#c8c8c8" stroke-width="1.6"/><line x1="2222" y1="652.4" x2="2234" y2="652.4" stroke="#c8c8c8" stroke-width="1.6"/><line x1="2222" y1="658.2" x2="2234" y2="658.2" stroke="#c8c8c8" stroke-width="1.6"/><line x1="2222" y1="664" x2="2234" y2="664" stroke="#c8c8c8" stroke-width="1.6"/><line x1="2222" y1="669.8" x2="2234" y2="669.8" stroke="#c8c8c8" stroke-width="1.6"/><path d="M2236 648.2 L2245 648.2 A7.4 7.4 0 0 1 2245 663.0 L2236 663.0 L2236 658.7 L2245 658.7 A3.1 3.1 0 0 0 2245 652.5 L2236 652.5 Z" fill="#c8c8c8"/><rect x="2239.6" y="647.6" width="1.6" height="16" fill="#535353"/><rect x="2284" y="642.6" width="8.1" height="8.1" fill="#c8c8c8"/><rect x="2284" y="652.9" width="8.1" height="8.1" fill="#c8c8c8"/><rect x="2284" y="663" width="8.1" height="7.7" fill="#c8c8c8"/><path d="M2296 648.2 L2305 648.2 A7.4 7.4 0 0 1 2305 663.0 L2296 663.0 L2296 658.7 L2305 658.7 A3.1 3.1 0 0 0 2305 652.5 L2296 652.5 Z" fill="#c8c8c8"/><rect x="2299.6" y="647.6" width="1.6" height="16" fill="#535353"/><rect x="2197" y="760" width="117" height="39" rx="3" fill="#434343" stroke="#5a5a5a" stroke-width="1.5"/><rect x="1991" y="826.4" width="22" height="22" rx="3.5" fill="none" stroke="#c6c6c6" stroke-width="2"/><rect x="1991" y="874.3" width="22" height="22" rx="3.5" fill="none" stroke="#c6c6c6" stroke-width="2"/><rect x="1991" y="922.4" width="22" height="22" rx="3.5" fill="none" stroke="#c6c6c6" stroke-width="2"/><rect x="1985.5" y="1058" width="231" height="40.5" rx="3" fill="none" stroke="#727272" stroke-width="1.6"/><rect x="2238.5" y="1058" width="199.5" height="40.5" rx="3" fill="none" stroke="#727272" stroke-width="1.6"/><rect x="1985.5" y="1120" width="452.5" height="40.5" rx="3" fill="none" stroke="#727272" stroke-width="1.6"/></svg>
<div class="t" style="left:1983px;top:104.7px;font-size:21px;font-weight:700;color:#f2f2f2;-webkit-text-stroke:0.1px currentColor;">Properties</div>
<div class="t" style="left:2122.5px;top:105.3px;font-size:20.3px;font-weight:700;color:#b4b4b4;-webkit-text-stroke:0.1px currentColor;">Layers</div>
<div class="t" style="left:2226.5px;top:104.7px;font-size:21px;font-weight:700;color:#b4b4b4;-webkit-text-stroke:0.1px currentColor;">Libraries</div>
<div class="t" style="left:1984.3px;top:167.7px;font-size:21px;font-weight:400;color:#d4d4d4;">No Selection</div>
<div class="t" style="left:1984.3px;top:236.2px;font-size:21.6px;font-weight:400;color:#d4d4d4;">Document</div>
<div class="t" style="right:351px;text-align:right;top:291.2px;font-size:21px;font-weight:400;color:#d4d4d4;">Units:</div>
<div class="t" style="left:2148.7px;top:290.8px;font-size:21.5px;font-weight:400;color:#f2f2f2;">Pixels</div>
<div class="t" style="right:351px;text-align:right;top:348.0px;font-size:21.8px;font-weight:400;color:#d4d4d4;">Artboard:</div>
<div class="t" style="left:2143px;top:346.3px;font-size:21.5px;font-weight:400;color:#f2f2f2;">1</div>
<div class="t" style="left:1649px;width:1200px;text-align:center;top:406.6px;font-size:21.7px;font-weight:400;color:#f2f2f2;">Edit Artboards</div>
<div class="t" style="left:1984.3px;top:494.2px;font-size:21px;font-weight:400;color:#d4d4d4;">Ruler &amp; Grids</div>
<div class="t" style="left:1984.3px;top:569.8px;font-size:21.5px;font-weight:400;color:#d4d4d4;">Guides</div>
<div class="t" style="left:1984.3px;top:646.2px;font-size:21px;font-weight:400;color:#d4d4d4;">Snap Options</div>
<div class="t" style="left:1984.3px;top:718.0px;font-size:21.3px;font-weight:400;color:#d4d4d4;">Preferences</div>
<div class="t" style="left:1984.3px;top:771.3px;font-size:21.5px;font-weight:400;color:#d4d4d4;">Keyboard Increment:</div>
<div class="t" style="left:2208px;top:765.8px;font-size:21.5px;font-weight:400;color:#f2f2f2;">1 px</div>
<div class="t" style="left:2020.7px;top:827.6px;font-size:20.6px;font-weight:400;color:#d4d4d4;">Use Preview Bounds</div>
<div class="t" style="left:2020.7px;top:875.2px;font-size:21px;font-weight:400;color:#d4d4d4;">Scale Corners</div>
<div class="t" style="left:2020.7px;top:923.6px;font-size:20.6px;font-weight:400;color:#d4d4d4;">Scale Strokes &amp; Effects</div>
<div class="t" style="left:1984.3px;top:1013.1px;font-size:21.7px;font-weight:400;color:#d4d4d4;">Quick Actions</div>
<div class="t" style="left:1501px;width:1200px;text-align:center;top:1068.4px;font-size:21.4px;font-weight:400;color:#f2f2f2;">Document Setup</div>
<div class="t" style="left:1738px;width:1200px;text-align:center;top:1068.4px;font-size:21.4px;font-weight:400;color:#f2f2f2;">Preferences</div>
<div class="t" style="left:1611.5px;width:1200px;text-align:center;top:1130.6px;font-size:21.1px;font-weight:400;color:#f2f2f2;">Generate Vectors</div>
<div class="r" style="left:1983px;top:1182px;width:483px;height:324px;background:#535353;border:2px solid #343434;border-right:2px solid #383838;border-radius:8px 8px 2px 2px;box-shadow:0 3px 8px rgba(0,0,0,0.35);"></div>
<div class="r" style="left:1985px;top:1184px;width:479px;height:24px;background:#424242;border-radius:6px 6px 0 0;"></div>
<div class="r" style="left:1985px;top:1208px;width:479px;height:1.5px;background:#363636;"></div>
<div class="r" style="left:2114px;top:1209px;width:350px;height:54px;background:#424242;"></div>
<div class="r" style="left:2114px;top:1262px;width:350px;height:2px;background:#383838;"></div>
<svg class="s" style="left:0px;top:0px;pointer-events:none;" width="2473" height="1683" viewBox="0 0 2473 1683"><rect x="2114" y="1209" width="1.2" height="54" fill="#363636"/><rect x="2231" y="1209" width="1.2" height="54" fill="#363636"/><rect x="2352" y="1209" width="1.2" height="54" fill="#363636"/><path d="M1995.5 1192 L2005 1201.5 M2005 1192 L1995.5 1201.5" stroke="#c8c8c8" stroke-width="1.8"/><path d="M2440 1192 L2435 1197 L2440 1202 M2448 1192 L2443 1197 L2448 1202" fill="none" stroke="#c8c8c8" stroke-width="1.5"/><rect x="2432" y="1230" width="20" height="2" fill="#c8c8c8"/><rect x="2432" y="1236" width="20" height="2" fill="#c8c8c8"/><rect x="2432" y="1242" width="20" height="2" fill="#c8c8c8"/><rect x="2015" y="1297.3" width="38" height="38" fill="#fff" stroke="#2a2a2a" stroke-width="2"/><rect x="2026" y="1308" width="16" height="16" fill="#535353" stroke="#3a3a3a" stroke-width="3"/><line x1="2016" y1="1334" x2="2052" y2="1298" stroke="#e62b1e" stroke-width="3"/><rect x="1995.2" y="1277.4" width="38" height="37.6" fill="#fff" stroke="#2a2a2a" stroke-width="2"/><rect x="2295.5" y="1287.4" width="49.5" height="49" rx="5" fill="#494949" stroke="#6a6a6a" stroke-width="2"/><rect x="2306" y="1298" width="8" height="8" fill="#c8c8c8"/><rect x="2326" y="1298" width="8" height="8" fill="#c8c8c8"/><rect x="2316" y="1308" width="8" height="8" fill="#c8c8c8"/><rect x="2306" y="1318" width="8" height="8" fill="#c8c8c8"/><rect x="2326" y="1318" width="8" height="8" fill="#c8c8c8"/><rect x="2357.5" y="1285.5" width="95" height="51" rx="5" fill="none" stroke="#5e5e5e" stroke-width="1.6"/><rect x="2405" y="1286.5" width="46.5" height="49.5" fill="#2e2e2e"/><line x1="2404.5" y1="1286" x2="2404.5" y2="1336" stroke="#5e5e5e" stroke-width="1.4"/><rect x="2368" y="1296" width="24" height="3.6" rx="1" fill="#c8c8c8"/><rect x="2368" y="1304" width="24" height="3.6" rx="1" fill="#c8c8c8"/><rect x="2368" y="1312" width="24" height="3.6" rx="1" fill="#c8c8c8"/><rect x="2368" y="1320" width="24" height="3.6" rx="1" fill="#c8c8c8"/><rect x="2416.0" y="1296.0" width="8.2" height="8.2" fill="#ffffff"/><rect x="2416.0" y="1306.0" width="8.2" height="8.2" fill="#ffffff"/><rect x="2416.0" y="1316.0" width="8.2" height="8.2" fill="#ffffff"/><rect x="2426.0" y="1296.0" width="8.2" height="8.2" fill="#ffffff"/><rect x="2426.0" y="1306.0" width="8.2" height="8.2" fill="#ffffff"/><rect x="2426.0" y="1316.0" width="8.2" height="8.2" fill="#ffffff"/><rect x="2436.0" y="1296.0" width="8.2" height="8.2" fill="#ffffff"/><rect x="2436.0" y="1306.0" width="8.2" height="8.2" fill="#ffffff"/><rect x="2436.0" y="1316.0" width="8.2" height="8.2" fill="#ffffff"/><rect x="1995" y="1349.5" width="458" height="99.5" fill="none" stroke="#5c5c5c" stroke-width="2"/><path d="M2432 1365 L2439 1358.5 L2446 1365" fill="none" stroke="#5e5e5e" stroke-width="1.5"/><path d="M2432 1432 L2439 1438.5 L2446 1432" fill="none" stroke="#5e5e5e" stroke-width="1.5"/><rect x="1996" y="1350" width="26" height="26" fill="#fff"/><line x1="1998" y1="1374" x2="2020.5" y2="1351.5" stroke="#e62b1e" stroke-width="3.5"/><rect x="2024" y="1350" width="26" height="26" fill="#efefef"/><circle cx="2037" cy="1363" r="10" fill="none" stroke="#777" stroke-width="0.9"/><line x1="2024" y1="1363" x2="2050" y2="1363" stroke="#3c3c3c" stroke-width="1.8"/><line x1="2037" y1="1350" x2="2037" y2="1376" stroke="#3c3c3c" stroke-width="1.8"/><circle cx="2037" cy="1363" r="3.8" fill="#efefef" stroke="#3c3c3c" stroke-width="1.2"/><circle cx="2037" cy="1363" r="0.9" fill="#222"/><rect x="2052" y="1350" width="26" height="26" fill="#fff"/><circle cx="2065" cy="1363" r="6.6" fill="#e62b1e"/><rect x="2006" y="1460" width="4.2" height="18" fill="#c8c8c8"/><rect x="2012" y="1457.7" width="5.8" height="20.3" fill="#c8c8c8"/><rect x="2013.6" y="1460" width="1.8" height="5" fill="#535353"/><path d="M2019 1460 L2022 1459 L2027 1477 L2024 1478 Z" fill="#c8c8c8"/><path d="M2029 1476 L2036 1476 L2032.5 1480 Z" fill="#c8c8c8"/><g fill="none" stroke="#6e6e6e" stroke-width="1.6"><path d="M2061 1466 L2061 1457 L2080 1457 L2080 1461"/><path d="M2065 1466 L2065 1461 L2084 1461 L2084 1480 L2073 1480"/></g><path d="M2077 1461 L2082 1461 L2082 1469 L2079.5 1467 L2077 1469 Z" fill="#6e6e6e"/><path d="M2058 1474.5 L2064 1474.5 L2064 1470.5 L2070 1475.5 L2064 1481 L2064 1477 L2058 1477 Z" fill="#6e6e6e"/><rect x="2176" y="1458" width="20" height="20" fill="#c8c8c8"/><rect x="2178" y="1460" width="4" height="4" fill="#555"/><rect x="2184" y="1460" width="4" height="4" fill="#8a8a8a"/><rect x="2190" y="1460" width="4" height="4" fill="#8a8a8a"/><rect x="2178" y="1466" width="4" height="4" fill="#8a8a8a"/><rect x="2184" y="1466" width="4" height="4" fill="#555"/><rect x="2184" y="1472" width="4" height="4" fill="#8a8a8a"/><rect x="2190" y="1472" width="4" height="4" fill="#555"/><path d="M2200 1476 L2207 1476 L2203.5 1480 Z" fill="#c8c8c8"/><rect x="2231" y="1458.7" width="20.3" height="20.3" fill="none" stroke="#6e6e6e" stroke-width="1.6"/><rect x="2231" y="1458.7" width="20.3" height="3" fill="#6e6e6e"/><rect x="2234" y="1466" width="2" height="2" fill="#6e6e6e"/><rect x="2238" y="1466" width="10" height="2" fill="#6e6e6e"/><rect x="2234" y="1470" width="2" height="2" fill="#6e6e6e"/><rect x="2238" y="1470" width="10" height="2" fill="#6e6e6e"/><rect x="2234" y="1474" width="2" height="2" fill="#6e6e6e"/><rect x="2238" y="1474" width="10" height="2" fill="#6e6e6e"/><path d="M2280 1460 L2290 1460 L2293 1463 L2306 1463 L2306 1478 L2280 1478 Z" fill="#c8c8c8"/><path d="M2281.5 1466 L2289 1466 L2291 1463.5 L2281.5 1463.5 Z" fill="#535353"/><rect x="2337" y="1459" width="20.3" height="20.3" fill="none" stroke="#c8c8c8" stroke-width="2"/><path d="M2347.2 1463.5 L2347.2 1474.5 M2341.7 1469 L2352.7 1469" stroke="#c8c8c8" stroke-width="1.8"/><g fill="none" stroke="#6e6e6e" stroke-width="1.5"><line x1="2386" y1="1461" x2="2408" y2="1461"/><path d="M2393 1461 L2393 1457.5 L2401 1457.5 L2401 1461"/><path d="M2389 1461 L2390 1479 L2404 1479 L2405 1461"/><line x1="2394" y1="1464" x2="2394" y2="1476"/><line x1="2397" y1="1464" x2="2397" y2="1476"/><line x1="2400" y1="1464" x2="2400" y2="1476"/></g><rect x="1985" y="1488" width="481" height="4" fill="#363636"/><rect x="2209.0" y="1494" width="1.5" height="8" fill="#2e2e2e"/><rect x="2211.9" y="1494" width="1.5" height="8" fill="#2e2e2e"/><rect x="2214.8" y="1494" width="1.5" height="8" fill="#2e2e2e"/><rect x="2217.7" y="1494" width="1.5" height="8" fill="#2e2e2e"/><rect x="2220.6" y="1494" width="1.5" height="8" fill="#2e2e2e"/><rect x="2223.5" y="1494" width="1.5" height="8" fill="#2e2e2e"/><rect x="2226.4" y="1494" width="1.5" height="8" fill="#2e2e2e"/><rect x="2229.3" y="1494" width="1.5" height="8" fill="#2e2e2e"/><rect x="2232.2" y="1494" width="1.5" height="8" fill="#2e2e2e"/><rect x="2235.1" y="1494" width="1.5" height="8" fill="#2e2e2e"/></svg>
<div class="t" style="left:2002px;top:1224.7px;font-size:20.4px;font-weight:700;color:#f2f2f2;-webkit-text-stroke:0.1px currentColor;">Swatches</div>
<div class="t" style="left:2132.8px;top:1225.1px;font-size:20px;font-weight:700;color:#b4b4b4;-webkit-text-stroke:0.1px currentColor;">Brushes</div>
<div class="t" style="left:2250.3px;top:1224.7px;font-size:20.4px;font-weight:700;color:#b4b4b4;-webkit-text-stroke:0.1px currentColor;">Symbols</div>
<div class="r" style="left:686px;top:1496px;width:702px;height:72px;background:#535353;border:2px solid #2e2e2e;border-radius:9px;"></div>
<svg class="s" style="left:0px;top:0px;pointer-events:none;" width="2473" height="1683" viewBox="0 0 2473 1683"><rect x="698.5" y="1506" width="8" height="51.5" rx="4" fill="#b8b8b8"/><rect x="727" y="1505" width="236.5" height="54" rx="4" fill="none" stroke="#6e6e6e" stroke-width="1.8"/><rect x="973" y="1505" width="278" height="54" rx="4" fill="none" stroke="#6e6e6e" stroke-width="1.8"/><g transform="translate(764,1532) rotate(45)"><rect x="-5.5" y="-22" width="11" height="7" rx="1" fill="#c8c8c8"/><path d="M-5.5 -13.5 L5.5 -13.5 L5.5 12 L0 21.5 L-5.5 12 Z" fill="#c8c8c8"/><path d="M-2.6 13.5 L2.6 13.5 L0 18.5 Z" fill="#535353"/></g><path d="M996.5 1531 L996.5 1543.5 Q996.5 1546 999 1546 L1017.5 1546 Q1020 1546 1020 1543.5 L1020 1531.5" fill="none" stroke="#c8c8c8" stroke-width="3.2"/><polygon points="1017.50,1514.50 1020.05,1520.45 1026.00,1523.00 1020.05,1525.55 1017.50,1531.50 1014.95,1525.55 1009.00,1523.00 1014.95,1520.45" fill="#c8c8c8"/><polygon points="1007.50,1530.30 1009.13,1533.87 1012.70,1535.50 1009.13,1537.13 1007.50,1540.70 1005.87,1537.13 1002.30,1535.50 1005.87,1533.87" fill="#c8c8c8"/><circle cx="996.8" cy="1521" r="7.2" fill="#4a88e4"/><path d="M1270.9 1543 L1270.9 1521 L1297 1521 L1297 1531" fill="none" stroke="#c8c8c8" stroke-width="2.2"/><path d="M1272 1543.5 L1272 1537 C1274 1530 1277 1528 1278.5 1530 C1280 1532 1282 1534 1284 1536 L1282 1543.5 Z" fill="#c8c8c8"/><circle cx="1289.5" cy="1527.5" r="2.5" fill="#c8c8c8"/><circle cx="1291" cy="1539" r="9.8" fill="#535353"/><circle cx="1291" cy="1539" r="8.8" fill="#c8c8c8"/><path d="M1291 1534 L1291 1544 M1286 1539 L1296 1539" stroke="#535353" stroke-width="2"/><circle cx="1332" cy="1531.8" r="4.1" fill="#c8c8c8"/><circle cx="1344" cy="1531.8" r="4.1" fill="#c8c8c8"/><circle cx="1356" cy="1531.8" r="4.1" fill="#c8c8c8"/><circle cx="172" cy="1652" r="14.2" fill="#c8c8c8"/><rect x="155.5" y="1678.5" width="136.8" height="20" rx="4" fill="#4a4a4a" stroke="#666" stroke-width="1.4"/><line x1="257.7" y1="1679" x2="257.7" y2="1683" stroke="#666" stroke-width="1.4"/><rect x="301" y="1678.5" width="137.39999999999998" height="20" rx="4" fill="#4a4a4a" stroke="#666" stroke-width="1.4"/><line x1="403.3" y1="1679" x2="403.3" y2="1683" stroke="#666" stroke-width="1.4"/><rect x="521" y="1678.5" width="117.20000000000005" height="20" rx="4" fill="#4a4a4a" stroke="#666" stroke-width="1.4"/><line x1="603" y1="1679" x2="603" y2="1683" stroke="#666" stroke-width="1.4"/><rect x="1157" y="1677.5" width="769" height="6" fill="#4b4b4b"/><path d="M1935 1656 L1942 1663 L1949 1656" fill="none" stroke="#9a9a9a" stroke-width="1.8"/></svg>
<div class="t" style="left:-428px;width:1200px;text-align:center;top:1642.4px;font-size:22px;font-weight:700;color:#535353;-webkit-text-stroke:0.1px currentColor;">?</div>
<div class="t" style="left:796px;top:1520.8px;font-size:25px;font-weight:400;color:#f2f2f2;letter-spacing:-0.1px;">Draw (Pencil)</div>
<div class="t" style="left:1034.7px;top:1520.8px;font-size:25px;font-weight:400;color:#f2f2f2;letter-spacing:0.1px;">Generate Vectors</div>
<div class="t" style="left:208.7px;top:1641.4px;font-size:21.5px;font-weight:700;color:#dedede;-webkit-text-stroke:0.1px currentColor;">Click</div>
<div class="t" style="left:265px;top:1641.0px;font-size:22px;font-weight:400;color:#d6d6d6;letter-spacing:-0.1px;">the object to select</div>
<div class="t" style="left:466px;top:1641.0px;font-size:22px;font-weight:400;color:#d6d6d6;">|</div>
<div class="t" style="left:483.3px;top:1641.0px;font-size:22px;font-weight:700;color:#dedede;letter-spacing:-0.1px;-webkit-text-stroke:0.1px currentColor;">Shift+Click</div>
<div class="t" style="left:603.6px;top:1641.0px;font-size:22px;font-weight:400;color:#d6d6d6;letter-spacing:-0.1px;">to select multiple object</div>
<div class="t" style="left:853px;top:1641.0px;font-size:22px;font-weight:400;color:#d6d6d6;">|</div>
<div class="t" style="left:872px;top:1641.0px;font-size:22px;font-weight:700;color:#dedede;letter-spacing:-0.1px;-webkit-text-stroke:0.1px currentColor;">Option+Drag</div>
<div class="t" style="left:1012.5px;top:1641.0px;font-size:22px;font-weight:400;color:#d6d6d6;letter-spacing:-0.1px;">the object to duplicate</div>
</body></html>
